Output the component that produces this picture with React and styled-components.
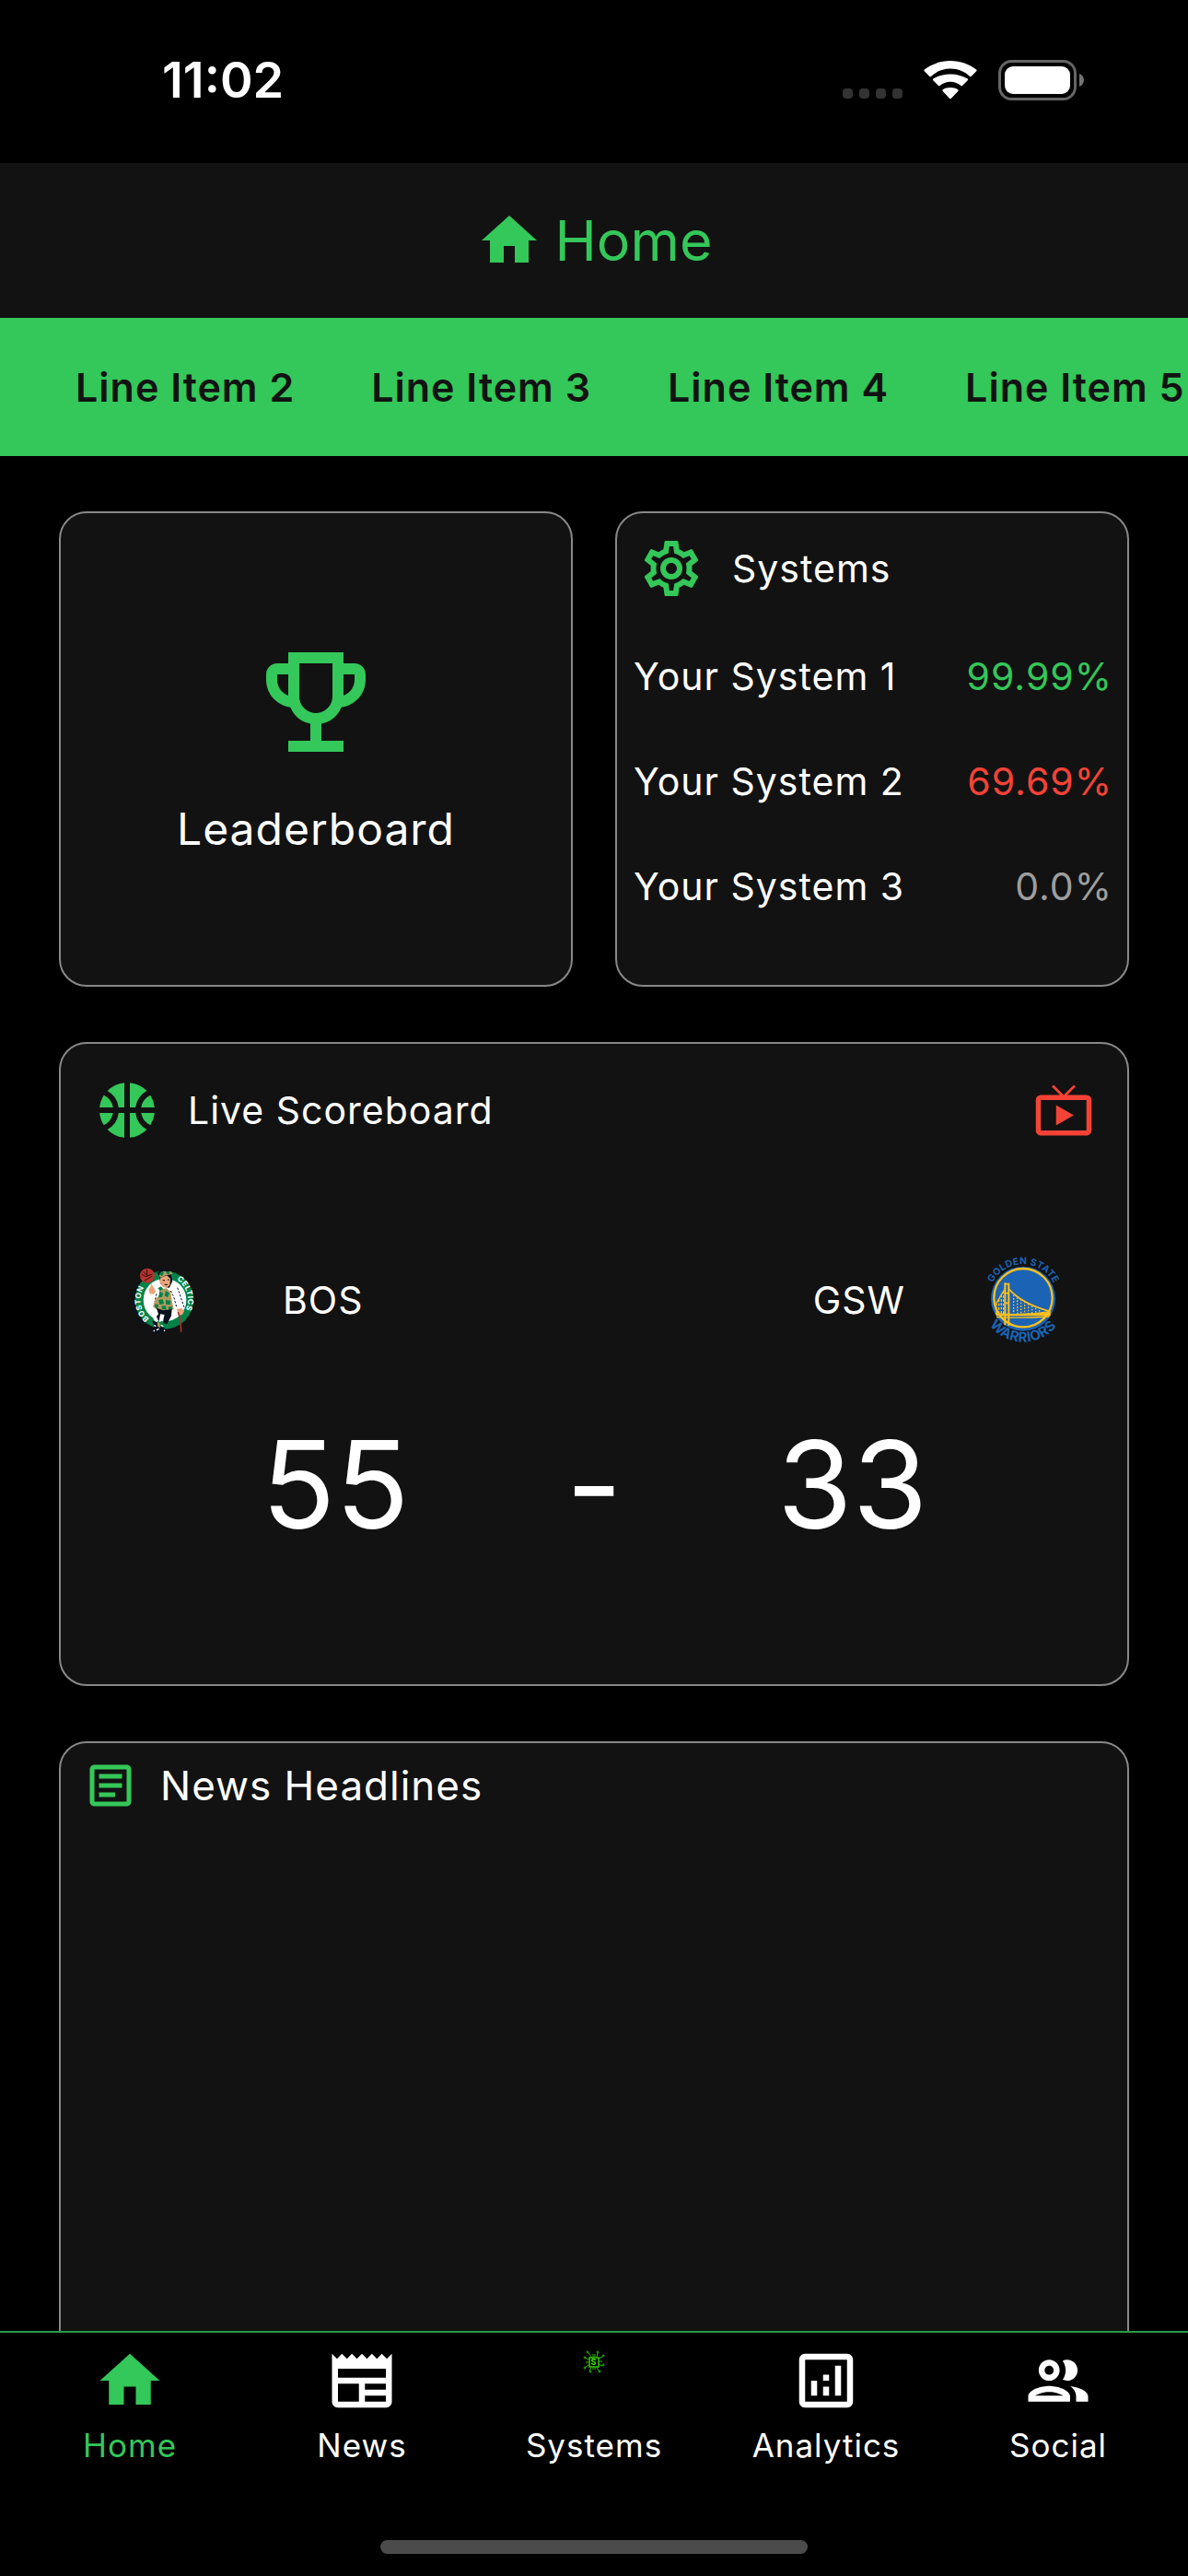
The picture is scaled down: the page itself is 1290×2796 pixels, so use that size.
import React from "react";
import styled, { createGlobalStyle } from "styled-components";
import {
  MdHome,
  MdOutlineEmojiEvents,
  MdOutlineSettings,
  MdSportsBasketball,
  MdLiveTv,
  MdOutlineArticle,
  MdNewspaper,
  MdOutlineAnalytics,
  MdOutlineGroup,
} from "react-icons/md";

const color = {
  green: "#34c759",
  red: "#f44336",
  grey: "#9e9e9e",
  surface: "#121212",
  white: "#ffffff",
};

const GlobalStyle = createGlobalStyle`
  *, *::before, *::after { box-sizing: border-box; }
  body {
    margin: 0;
    background: #000;
    color: ${color.white};
    font-family: Inter, "Liberation Sans", sans-serif;
  }
  h1, h2, p, ul, dl, dt, dd { margin: 0; padding: 0; font-weight: 400; }
  svg { display: block; flex: none; }
`;

const Screen = styled.div`
  display: flex;
  flex-direction: column;
  height: 100vh;
  overflow: hidden;
`;

const StatusBar = styled.div`
  flex: none;
  display: flex;
  align-items: center;
  justify-content: space-between;
  height: 177px;
  padding: 0 112px 3px 176px;
`;

const Clock = styled.time`
  font-size: 54px;
  line-height: 64px;
  font-weight: 600;
`;

const StatusIcons = styled.div`
  display: flex;
  align-items: center;
  gap: 23px;
`;

const AppBar = styled.header`
  flex: none;
  display: flex;
  align-items: center;
  justify-content: center;
  gap: 14px;
  height: 168px;
  background: ${color.surface};
  color: ${color.green};
`;

const AppTitle = styled.h1`
  font-size: 61px;
  line-height: 80px;
`;

const Ticker = styled.ul`
  flex: none;
  display: flex;
  align-items: center;
  gap: 83px;
  height: 150px;
  padding-left: 82px;
  overflow: hidden;
  list-style: none;
  background: ${color.green};
  color: ${color.surface};
`;

const TickerItem = styled.li`
  flex: none;
  font-size: 43px;
  line-height: 60px;
  font-weight: 600;
  letter-spacing: 1px;
  white-space: nowrap;
`;

const Content = styled.main`
  flex: 1;
  min-height: 0;
  display: flex;
  flex-direction: column;
  gap: 60px;
  padding: 60px 64px 0;
  overflow-y: auto;
  scrollbar-width: none;
`;

const CardPair = styled.div`
  flex: none;
  display: grid;
  grid-template-columns: 1fr 1fr;
  gap: 46px;
`;

const Card = styled.section`
  flex: none;
  display: flex;
  flex-direction: column;
  border: 2px solid #888;
  border-radius: 30px;
  background: ${color.surface};
`;

const LeaderboardCard = styled(Card)`
  align-items: center;
  justify-content: center;
  gap: 34px;
  padding-bottom: 4px;
  color: ${color.green};
`;

const LeaderboardTitle = styled.h2`
  color: ${color.white};
  font-size: 48px;
  line-height: 64px;
  letter-spacing: 1px;
`;

const SystemsCard = styled(Card)`
  padding: 24px 16px 50px 18px;
`;

const ScoreCard = styled(Card)`
  padding: 36px 36px 137px;
`;

const NewsCard = styled(Card)`
  min-height: 900px;
  padding: 16px 24px;
`;

const CardHeader = styled.div`
  display: flex;
  align-items: center;
  gap: ${(p) => p.$gap}px;
  padding: 0 ${(p) => p.$inset || 0}px;
  color: ${color.green};
`;

const CardTitle = styled.h2`
  flex: 1;
  color: ${color.white};
  font-size: ${(p) => (p.$large ? 44 : 41)}px;
  line-height: 60px;
  letter-spacing: 1px;
`;

const WatchButton = styled.button`
  padding: 0;
  border: 0;
  background: none;
  color: ${color.red};
  cursor: pointer;
`;

const SystemList = styled.dl`
  margin-top: 24px;
`;

const SystemRow = styled.div`
  display: flex;
  align-items: center;
  justify-content: space-between;
  height: 114px;
  font-size: 41px;
  line-height: 60px;
  letter-spacing: 1px;
`;

const SystemRate = styled.dd`
  color: ${(p) => p.$tone};
`;

const Teams = styled.div`
  display: flex;
  justify-content: space-between;
  margin-top: 110px;
  padding: 0 18px;
`;

const Team = styled.div`
  display: flex;
  flex-direction: ${(p) => (p.$away ? "row-reverse" : "row")};
  align-items: center;
  gap: 67px;
  font-size: 41px;
  line-height: 60px;
  letter-spacing: 1px;
`;

const Score = styled.p`
  display: grid;
  grid-template-columns: repeat(3, 1fr);
  margin-top: 60px;
  padding: 0 122px;
  font-size: 132px;
  line-height: 160px;
  text-align: center;
`;

const TabBar = styled.nav`
  flex: none;
  display: flex;
  flex-direction: column;
  justify-content: space-between;
  align-items: center;
  height: 266px;
  padding-bottom: 24px;
  border-top: 2px solid #249b45;
`;

const Tabs = styled.div`
  display: grid;
  grid-template-columns: repeat(5, 1fr);
  align-self: stretch;
  padding: 13px 15px 0;
`;

const Tab = styled.a`
  display: flex;
  flex-direction: column;
  align-items: center;
  gap: 7px;
  color: ${(p) => (p.$active ? color.green : color.white)};
  font-size: 35px;
  line-height: 48px;
  letter-spacing: 1px;
  text-decoration: none;
`;

const TabIcon = styled.span`
  display: flex;
  justify-content: center;
  height: 78px;
`;

const HomeIndicator = styled.div`
  width: 36%;
  height: 15px;
  border-radius: 8px;
  background: #4b4b4b;
`;

function SignalDots() {
  return (
    <svg width="65" height="42" viewBox="0 0 65 42" fill="#333">
      {[0, 18, 36, 54].map((x) => (
        <rect key={x} x={x} y="30" width="11" height="11" rx="4" />
      ))}
    </svg>
  );
}

function Wifi() {
  return (
    <svg width="58" height="42" viewBox="0 0 58 42" fill="#fff">
      <path d="M29 8.600c8.100 0 15.500 3.200 21.100 8.300.4.400 1.100.4 1.500 0l5.600-5.700c.5-.5.500-1.300 0-1.700C49.500 3.600 39.700 0 29 0S8.500 3.600.8 9.500c-.5.400-.5 1.200 0 1.700l5.600 5.700c.4.400 1.100.4 1.500 0C13.500 11.800 20.900 8.600 29 8.600z" />
      <path d="M29 22.700c4.400 0 8.400 1.600 11.500 4.300.4.400 1.100.4 1.500 0l5.700-5.700c.5-.5.500-1.300 0-1.700C42.700 16.500 36.200 14.500 29 14.500s-13.700 2-18.700 5.100c-.5.400-.5 1.200 0 1.700L16 27c.4.400 1.100.4 1.500 0 3.100-2.700 7.100-4.300 11.500-4.300z" />
      <path d="M37.300 33c.5-.5.500-1.200 0-1.700-2.300-1.500-5-2.300-8.300-2.300s-6 .8-8.300 2.300c-.5.500-.5 1.200 0 1.700l7.500 7.900c.4.400 1.100.4 1.500 0z" />
    </svg>
  );
}

function Battery() {
  return (
    <svg width="94" height="44" viewBox="0 0 94 44">
      <rect x="1.500" y="1.500" width="82" height="41" rx="13" fill="none" stroke="#666" strokeWidth="3" />
      <rect x="7" y="7" width="71" height="30" rx="9" fill="#fff" />
      <path d="M88 15c3 1 5 4 5 7s-2 6-5 7z" fill="#737373" />
    </svg>
  );
}

function CelticsLogo() {
  return (
    <svg width="120" height="120" viewBox="0 0 360 360" role="img" aria-label="Boston Celtics">
      <defs>
        <path id="bos-left" d="M126 241A78 78 0 0 1 131 117" />
        <path id="bos-right" d="M216 114A78 78 0 0 1 238 224" />
      </defs>
      <circle cx="175" cy="180" r="95" fill="#008348" />
      <circle cx="177" cy="180" r="70" fill="#fff" />
      <g fill="#fff" fontFamily="Inter, sans-serif" fontWeight="700" fontSize="25">
        <text><textPath href="#bos-left">BOSTON</textPath></text>
        <text><textPath href="#bos-right">CELTICS</textPath></text>
      </g>
      <path d="M152 146l22-14 18 4 22 4 12 22 10 44-16 4-16-38-8 34-52 4-4-24-14-14 6-30z" fill="#fff" />
      <path d="M218 140l8 22 14 42M196 150l10 20 10 36M150 160l-6 26 14-6" fill="none" stroke="#06101f" strokeWidth="3" strokeDasharray="7 5" />
      <path d="M152 92q18-20 36-10l8 10 6 26-10 22-18-2-12-12-2-22z" fill="#06101f" />
      <path d="M163 108l20-8 12 10-2 22-10 8-14-4-8-14z" fill="#eaa678" />
      <path d="M170 116h7M186 114h5M176 130h10" stroke="#06101f" strokeWidth="3" />
      <path d="M158 100l14-14 26 2 4 8-22 4-16 8z" fill="#b39a5e" />
      <path d="M158 96l8-10 8 6-6 10zM180 88l10-2 4 8-10 2z" fill="#008348" />
      <path d="M130 138l-6 8 4 14 12 2 8-10-6-10-10-16z" fill="#eaa678" />
      <path d="M158 146l24-4 14 12 4 28 6 28-18 8-34-4-16-12 8-24 14-14z" fill="#b39a5e" />
      <path d="M160 152l12 6-4 12-12 2zM180 150l12 8-6 14-10-6zM156 180l14-2 4 14-14 4zM180 180l16 2-2 14-14-2zM146 192l10 4-2 12-10-4zM166 200l14-2 2 14-14-2zM188 202l12 0 2 8-12 4zM154 142l10-6 8 8-10 6z" fill="#008348" />
      <path d="M150 206l22 8 28-4-2 22-14 26-12-2 0-18-20 12-10-6 14-18z" fill="#06101f" />
      <path d="M162 226l14 2-6 20-12 4zM138 238l12-4 6 14-10 6z" fill="#fff" />
      <path d="M136 246l20 8 4 10 18 8-2 16-14-6-10 8-14-2 4-20z" fill="#06101f" />
      <path d="M152 252l8 2 2 16-8-2z" fill="#b39a5e" />
      <path d="M142 262l6 4M150 278l8-4M164 262l8 4M140 282l4-3M174 278l3 3" stroke="#fff" strokeWidth="4" />
      <path d="M216 210l16-4 8 10-6 12-14-2z" fill="#eaa678" />
      <path d="M220 220l8 24 2 40" fill="none" stroke="#a8302e" strokeWidth="5" />
      <circle cx="120" cy="101" r="24" fill="#b5342f" />
      <path d="M102 96l12 8 22-8M110 118l26-16M118 80l2 24M108 88l10 12" fill="none" stroke="#3b1011" strokeWidth="3" />
    </svg>
  );
}

function WarriorsLogo() {
  const cables = [152, 164, 176, 188, 200, 212, 224, 236];
  return (
    <svg width="120" height="120" viewBox="0 0 360 360" role="img" aria-label="Golden State Warriors">
      <defs>
        <path id="gsw-top" d="M83 124A112 112 0 0 1 292 152" />
        <path id="gsw-bottom" d="M74 262A139 139 0 0 0 314 228" />
      </defs>
      <circle cx="183" cy="176" r="105" fill="#1b64b5" />
      <circle cx="183" cy="173" r="95" fill="none" stroke="#fdbf1c" strokeWidth="7" />
      <g stroke="#fdbf1c" fill="none">
        <path d="M126 140L96 190" strokeWidth="4" />
        <path d="M138 146Q180 192 266 216" strokeWidth="5" />
        <path d="M96 190v34M104 178v48M112 164v62M119 152v74" strokeWidth="4" strokeDasharray="8 5" />
        {cables.map((x, i) => (
          <path key={x} d={`M${x} ${164 + i * 7}V226`} strokeWidth="4" strokeDasharray="5 5" />
        ))}
        <path d="M124 124v138M136 126v138" strokeWidth="6" />
        <path d="M122 128h16M122 158h16M122 190h16" strokeWidth="5" />
      </g>
      <path d="M92 222q90 8 180-6v16H96z" fill="#fdbf1c" />
      <path d="M96 236q80 4 172-2" fill="none" stroke="#fdbf1c" strokeWidth="4" />
      <g fill="#1b64b5" fontFamily="Inter, sans-serif" fontWeight="700">
        <text fontSize="31"><textPath href="#gsw-top">GOLDEN STATE</textPath></text>
        <text fontSize="45"><textPath href="#gsw-bottom">WARRIORS</textPath></text>
      </g>
    </svg>
  );
}

function ChipLogo() {
  return (
    <svg width="24" height="40" viewBox="0 0 24 40" fill="none" stroke="#2fb806" strokeWidth="1">
      <rect x="7" y="14" width="10" height="10" stroke="#38cc08" strokeWidth="1.500" />
      <path d="M9 13l-3-4M11 13v-3M13 13v-3M15 13l1-4M17 15l4-2M18 18h3M17 21l4 2M15 25l3 4M13 25v2M11 25v2M9 25l-2 3M6 22l-4 3M6 19H3M6 16l-4-2" />
      <circle cx="5" cy="8" r="1" />
      <circle cx="16" cy="8" r="1" />
      <circle cx="22" cy="12" r="1" />
      <circle cx="22" cy="22" r="1" />
      <circle cx="18" cy="29" r="1" />
      <circle cx="8" cy="29" r="1" />
      <circle cx="2" cy="25" r="1" />
      <circle cx="2" cy="14" r="1" />
      <text x="12" y="22" textAnchor="middle" fill="#4ae010" stroke="none" fontFamily="Inter, sans-serif" fontWeight="700" fontSize="9">S</text>
    </svg>
  );
}

const systems = [
  { name: "Your System 1", rate: "99.99%", tone: color.green },
  { name: "Your System 2", rate: "69.69%", tone: color.red },
  { name: "Your System 3", rate: "0.0%", tone: color.grey },
];

const tabs = [
  { label: "Home", icon: <MdHome size={78} />, active: true },
  { label: "News", icon: <MdNewspaper size={78} /> },
  { label: "Systems", icon: <ChipLogo /> },
  { label: "Analytics", icon: <MdOutlineAnalytics size={78} /> },
  { label: "Social", icon: <MdOutlineGroup size={78} /> },
];

export default function App() {
  return (
    <Screen>
      <GlobalStyle />
      <StatusBar>
        <Clock>11:02</Clock>
        <StatusIcons>
          <SignalDots />
          <Wifi />
          <Battery />
        </StatusIcons>
      </StatusBar>
      <AppBar>
        <MdHome size={72} />
        <AppTitle>Home</AppTitle>
      </AppBar>
      <Ticker>
        {[2, 3, 4, 5].map((n) => (
          <TickerItem key={n}>Line Item {n}</TickerItem>
        ))}
      </Ticker>
      <Content>
        <CardPair>
          <LeaderboardCard>
            <MdOutlineEmojiEvents size={144} />
            <LeaderboardTitle>Leaderboard</LeaderboardTitle>
          </LeaderboardCard>
          <SystemsCard>
            <CardHeader $gap={30} $inset={5}>
              <MdOutlineSettings size={72} />
              <CardTitle>Systems</CardTitle>
            </CardHeader>
            <SystemList>
              {systems.map((s) => (
                <SystemRow key={s.name}>
                  <dt>{s.name}</dt>
                  <SystemRate $tone={s.tone}>{s.rate}</SystemRate>
                </SystemRow>
              ))}
            </SystemList>
          </SystemsCard>
        </CardPair>
        <ScoreCard>
          <CardHeader $gap={30}>
            <MdSportsBasketball size={72} />
            <CardTitle>Live Scoreboard</CardTitle>
            <WatchButton aria-label="Watch live">
              <MdLiveTv size={66} />
            </WatchButton>
          </CardHeader>
          <Teams>
            <Team>
              <CelticsLogo />
              BOS
            </Team>
            <Team $away>
              <WarriorsLogo />
              GSW
            </Team>
          </Teams>
          <Score>
            <span>55</span>
            <span>-</span>
            <span>33</span>
          </Score>
        </ScoreCard>
        <NewsCard>
          <CardHeader $gap={24}>
            <MdOutlineArticle size={60} />
            <CardTitle $large>News Headlines</CardTitle>
          </CardHeader>
        </NewsCard>
      </Content>
      <TabBar>
        <Tabs>
          {tabs.map((t) => (
            <Tab key={t.label} href={`#${t.label.toLowerCase()}`} $active={t.active}>
              <TabIcon>{t.icon}</TabIcon>
              {t.label}
            </Tab>
          ))}
        </Tabs>
        <HomeIndicator />
      </TabBar>
    </Screen>
  );
}
